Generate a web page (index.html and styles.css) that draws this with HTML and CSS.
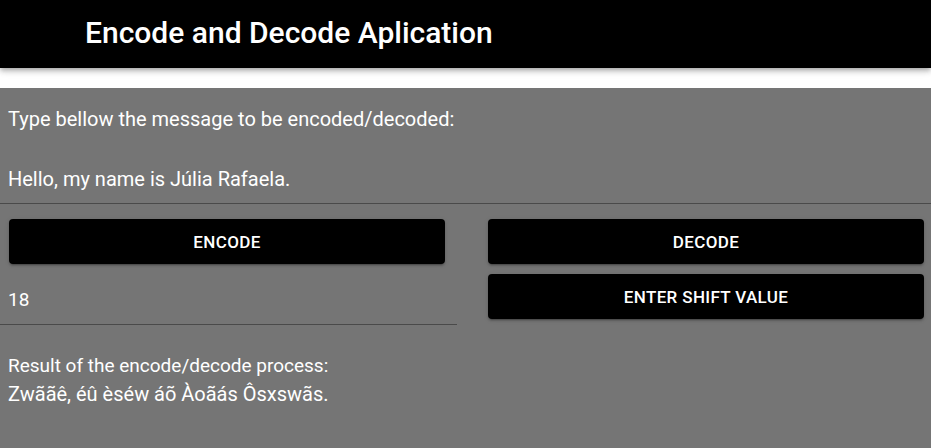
FILE: index.html
```html
<!DOCTYPE html>
<html>
<head>
<meta charset="utf-8">
<link rel="stylesheet" href="styles.css">
</head>
<body>
<header class="appbar">
  <h1 class="title">Encode and Decode Aplication</h1>
</header>
<main class="content">
  <section class="message">
    <p class="label">Type bellow the message to be encoded/decoded:</p>
    <div class="field field-full">
      <span class="field-value big">Hello, my name is Júlia Rafaela.</span>
    </div>
  </section>
  <section class="controls">
    <div class="col col-left">
      <button class="btn btn-left">ENCODE</button>
      <div class="field field-shift">
        <span class="field-value">18</span>
      </div>
    </div>
    <div class="col col-right">
      <button class="btn">DECODE</button>
      <button class="btn">ENTER SHIFT VALUE</button>
    </div>
  </section>
  <section class="result">
    <p class="result-line">Result of the encode/decode process:</p>
    <p class="result-line result-value">Zwããê, éû èséw áõ Àoãás Ôsxswãs.</p>
  </section>
</main>
</body>
</html>
```

FILE: styles.css
```css
html, body {
  margin: 0;
  padding: 0;
  background: #ffffff;
  font-family: Roboto, "Liberation Sans", sans-serif;
  height: 100%;
}

.appbar {
  position: relative;
  z-index: 2;
  background: #000000;
  height: 68px;
  display: flex;
  align-items: center;
  padding-left: 85px;
  box-shadow: 0 2px 4px -1px rgba(0,0,0,0.2), 0 4px 5px 0 rgba(0,0,0,0.14), 0 1px 10px 0 rgba(0,0,0,0.12);
}

.title {
  margin: 0;
  color: #ffffff;
  font-size: 30px;
  font-weight: 500;
  line-height: 1;
  padding-bottom: 3px;
}

.content {
  margin-top: 20px;
  background: #757575;
  min-height: 360px;
  color: #ffffff;
}

.message {
  padding-top: 19px;
}

.label {
  margin: 0 0 0 8px;
  font-size: 20px;
  line-height: 24px;
}

.field {
  border-bottom: 1px solid #4a4a4a;
}

.field-full {
  margin-top: 36px;
  padding: 0 8px 12px;
}

.field-value {
  display: block;
  font-size: 19px;
  line-height: 24px;
}

.field-value.big {
  font-size: 20px;
}

.controls {
  display: grid;
  grid-template-columns: 1fr 1fr;
  padding-top: 15px;
}

.col {
  display: flex;
  flex-direction: column;
}

.col-left {
  align-items: flex-start;
}

.col-right {
  padding-left: 22.5px;
  gap: 10px;
}

.btn {
  width: 436px;
  height: 45px;
  border: none;
  border-radius: 4px;
  background: #000000;
  color: #ffffff;
  font-family: Roboto, "Liberation Sans", sans-serif;
  font-size: 17px;
  font-weight: 500;
  letter-spacing: 0.35px;
  box-shadow: 0 3px 1px -2px rgba(0,0,0,0.2), 0 2px 2px 0 rgba(0,0,0,0.14), 0 1px 5px 0 rgba(0,0,0,0.12);
  padding: 0;
}

.btn-left {
  margin-left: 9px;
}

.field-shift {
  box-sizing: border-box;
  width: 457px;
  margin-top: 24px;
  padding: 0 8px 12px;
}

.result {
  padding: 27px 8px 40px;
}

.result-line {
  margin: 0;
  font-size: 19px;
  line-height: 28px;
}

.result-value {
  font-size: 20px;
}
```
